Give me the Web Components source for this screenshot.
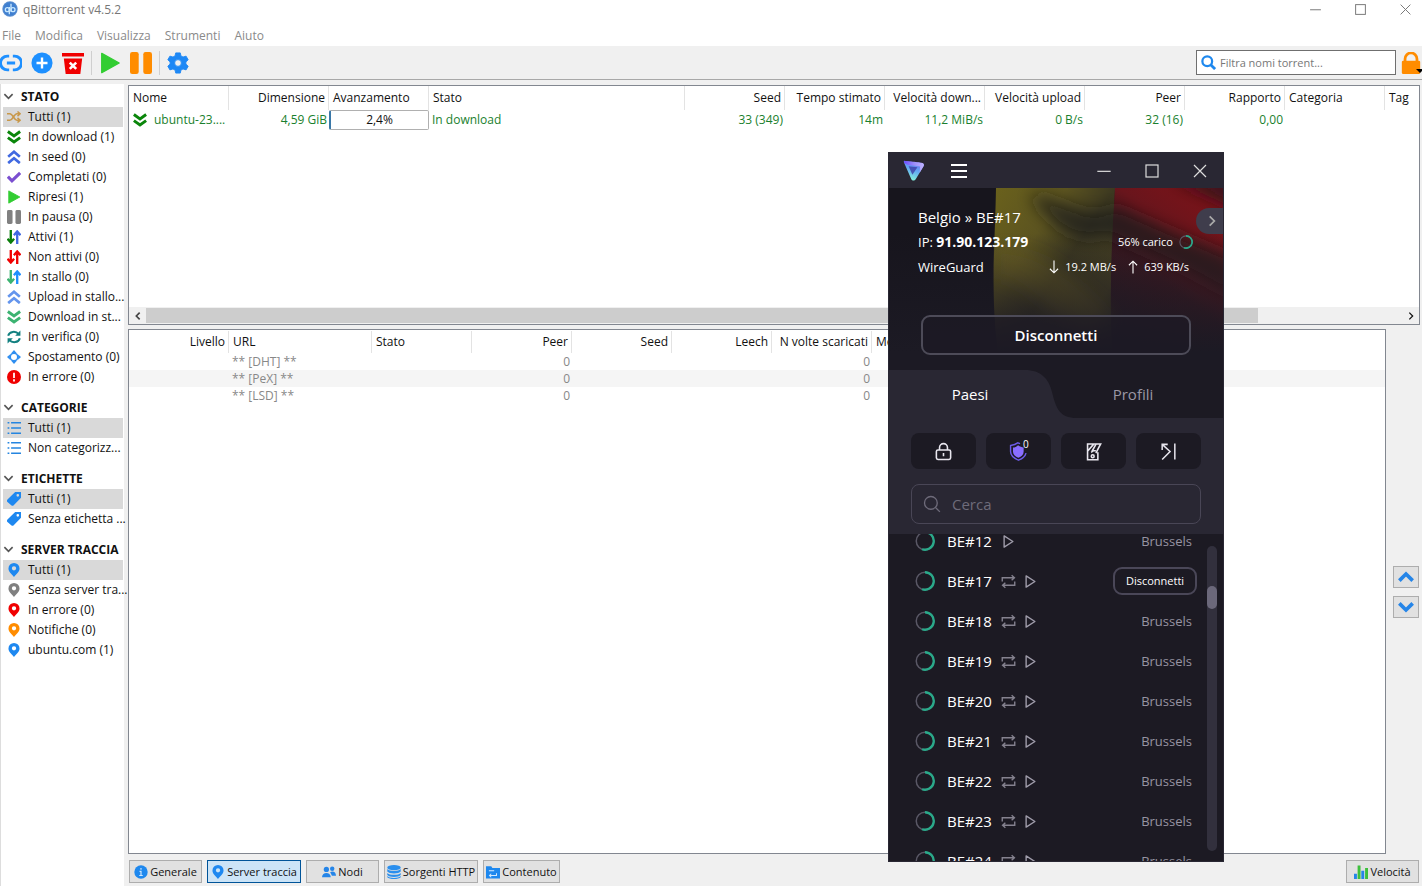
<!DOCTYPE html>
<html lang="it">
<head>
<meta charset="utf-8">
<title>qBittorrent v4.5.2</title>
<style>
  html, body { margin: 0; }
  body { font: 12px/20px "Open Sans", "Noto Sans", sans-serif; color: #111; background: #f0f0f0; overflow-x: hidden; }
</style>
</head>
<body>
<qb-app></qb-app>
<vpn-window></vpn-window>

<script>
const ICONS = {
  logo: '<circle cx="12" cy="12" r="11.5" fill="#5b8fd0"/><circle cx="12" cy="12" r="10" fill="#3f7fd0"/><g fill="none" stroke="#c8e8ff" stroke-width="2"><circle cx="8" cy="13" r="3"/><path d="M11 9v11M13.5 4v12"/><circle cx="16.5" cy="13" r="3"/></g>',
  link: '<g fill="none" stroke="#1e90ff" stroke-width="3.200"><path d="M10 4.500H8a7.500 7.500 0 0 0 0 15h2M14 4.500h2a7.500 7.500 0 0 1 0 15h-2M7.500 12h9"/></g>',
  add: '<circle cx="12" cy="12" r="11.500" fill="#1e90ff"/><path d="M12 6v12M6 12h12" stroke="#fff" stroke-width="2.600"/>',
  trash: '<path d="M0 1h24v4H0zM2 7h20L20 24H4z" fill="#f00000"/><path d="M8.500 11.500l7 7m0-7l-7 7" stroke="#fff" stroke-width="2.800"/>',
  play: '<path d="M3 1.500v21L22 12z" fill="#32cd32" stroke="#32cd32" stroke-width="1.500" stroke-linejoin="round"/>',
  pause: '<rect x="0" y="0" width="9.500" height="24" rx="2.500" fill="currentColor"/><rect x="14.500" y="0" width="9.500" height="24" rx="2.500" fill="currentColor"/>',
  gear: '<path fill="#1e88f5" stroke="#1e88f5" stroke-width="1" stroke-linejoin="round" fill-rule="evenodd" d="M9.500 1h5l.7 3.300 2.300 1.200 3.300-1 2.300 4-2.500 2.300v2.400l2.500 2.300-2.300 4-3.300-1-2.300 1.200-.7 3.300h-5l-.7-3.300-2.300-1.200-3.300 1-2.300-4 2.500-2.300v-2.400L.9 8.500l2.300-4 3.300 1 2.300-1.200zM12 8.300a3.700 3.700 0 1 0 0 7.400 3.700 3.700 0 0 0 0-7.400z"/>',
  search: '<g fill="none" stroke="#1e88ee" stroke-width="3.600"><circle cx="10" cy="10" r="7.800"/><path d="M15.500 15.500l7 7" stroke-width="4.400"/></g>',
  lock: '<path d="M5.500 12V7.500a6.500 6.500 0 0 1 13 0V12" fill="none" stroke="#ff8c00" stroke-width="3"/><rect x="2" y="9.500" width="20" height="14.500" rx="1.500" fill="#ff8c00"/>',
  chevron: '<path d="M3 7l9 9 9-9" fill="none" stroke="#555" stroke-width="3.600"/>',
  shuffle: '<g fill="none" stroke="#c8984a" stroke-width="2.600"><path d="M0 6.500h5c5 0 7 11 12 11h5M0 17.500h5c5 0 7-11 12-11h5M18 2.500l4.500 4-4.500 4M18 13.500l4.500 4-4.500 4"/></g>',
  down2: '<g fill="none" stroke="currentColor" stroke-width="5"><path d="M1.500 2.500L12 10l10.500-7.500M1.500 13L12 20.500 22.500 13"/></g>',
  up2: '<g fill="none" stroke="currentColor" stroke-width="4.600"><path d="M2 11.500l10-8.500 10 8.500M2 22.500L12 14l10 8.500"/></g>',
  check: '<path d="M1.500 11.500l7 7L22.500 5" fill="none" stroke="#7b4fd0" stroke-width="5.500"/>',
  updown: '<g fill="none" stroke-width="4"><path stroke="var(--a)" d="M6.500 0v21M.8 15l5.700 6.500 5.700-6.500"/><path stroke="var(--b)" d="M17.500 24V3M11.800 9l5.700-6.500L23.200 9"/></g>',
  refresh: '<g fill="none" stroke="#128080" stroke-width="3.400"><path d="M2 10C4 2 15 1 20 7M22 14c-2 8-13 9-18 3"/></g><path fill="#128080" d="M23 1v9h-9zM1 23v-9h9z"/>',
  move: '<circle cx="12" cy="12" r="6.500" fill="none" stroke="#2e8ef0" stroke-width="2.800"/><path fill="#2e8ef0" d="M12 0l4.500 5h-9zM12 24l-4.500-5h9zM0 12l5-4.500v9zM24 12l-5 4.500v-9z"/>',
  error: '<circle cx="12" cy="12" r="12" fill="#f00000"/><path d="M12 4.500v9M12 16v3.500" stroke="#fff" stroke-width="3"/>',
  list: '<path stroke="#2585e0" stroke-width="2.800" d="M7 3h17M7 12h17M7 21h17M1 3h3M1 12h3M1 21h3"/>',
  tag: '<path fill="#1e88f0" fill-rule="evenodd" d="M24 0v10L11.500 22.500a3 3 0 0 1-4.200 0L.8 17a3 3 0 0 1 0-4L14 0zM18.500 3.500a2 2 0 1 0 0 4.500 2 2 0 0 0 0-4.500z"/>',
  pin: '<path fill="currentColor" fill-rule="evenodd" d="M12 0a9.500 9.500 0 0 1 9.500 9.500c0 6-6 9.500-9.500 14.500C8.500 19 2.500 15.500 2.500 9.500A9.500 9.500 0 0 1 12 0zm0 5.500a3.700 3.700 0 1 0 0 7.400 3.700 3.700 0 0 0 0-7.400z"/>',
  info: '<circle cx="12" cy="12" r="11.500" fill="#1e88ee"/><path d="M12 5v3M9.500 11H12v7M9 18h6" stroke="#cfe8ff" stroke-width="2" fill="none"/>',
  peers: '<g fill="#2585e8"><circle cx="7.500" cy="7.500" r="4.500"/><path d="M0 21c0-10 15-10 15 0z"/><circle cx="17.500" cy="6.500" r="3.800"/><path d="M14 12.500c4-3 10-1 10 6h-7z"/></g>',
  db: '<g fill="#2a8fee"><ellipse cx="12" cy="4.500" rx="11.500" ry="4.500"/><path d="M.5 7c3 4.500 20 4.500 23 0v4c-3 4.500-20 4.500-23 0zM.5 13.500c3 4.500 20 4.500 23 0v3.500c-3 4.500-20 4.500-23 0zM.5 19c3 4.500 20 4.500 23 0v2c-3 4-20 4-23 0z"/></g>',
  folder: '<path fill="#1e88ee" d="M0 2h9l2 3h13v18H0z"/><path d="M5 10h9M18 14v4H7M9 15l-3 3 3 3" stroke="#d5eaff" stroke-width="1.800" fill="none"/>',
  chart: '<path fill="#2585e8" d="M0 15h5v9H0zM12.500 10h5v14h-5z"/><path fill="#3cc03c" d="M6.200 1h5v23h-5zM19 5h5v19h-5z"/>',
  up: '<path d="M2 17.500L12 7.500l10 10" fill="none" stroke="#2585e8" stroke-width="5.500"/>',
  down: '<path d="M2 6.500l10 10 10-10" fill="none" stroke="#2585e8" stroke-width="5.500"/>',
  left: '<path d="M16 4l-8 8 8 8" fill="none" stroke="#444" stroke-width="4"/>',
  right: '<path d="M8 4l8 8-8 8" fill="none" stroke="currentColor" stroke-width="3"/>',
  min: '<path d="M2 12.500h20" stroke="currentColor" stroke-width="1.800"/>',
  max: '<rect x="3" y="3" width="18" height="18" fill="none" stroke="currentColor" stroke-width="1.800"/>',
  close: '<path d="M3 3l18 18M21 3L3 21" stroke="currentColor" stroke-width="1.800"/>',
  vpn: '<defs><linearGradient id="v1" x1="0" y1="0" x2="1" y2="0"><stop offset="0" stop-color="#6d4aff"/><stop offset=".5" stop-color="#9a8cf8"/><stop offset="1" stop-color="#c0b4ff"/></linearGradient><linearGradient id="v2" x1=".8" y1="0" x2=".4" y2="1"><stop offset="0" stop-color="#6a5ff0"/><stop offset=".5" stop-color="#62a8f2"/><stop offset="1" stop-color="#86f5dc"/></linearGradient></defs><path fill="url(#v2)" d="M1 2.500C.6 1.500 1.500.8 2.500 1l19 2.500c2.200.2 3 2.300 1.800 4L14.500 22c-1.200 2-4 2-5 0z"/><path fill="url(#v1)" d="M1.500 1.200C2 1 22 3 22 3.500c2 .5 2.400 2.500 1.300 4L19 14.500l.5-7L5 5.500 1.200 3z"/><path fill="#3b36a0" d="M6.500 7l10 1.300-5.800 8.500z" opacity=".75"/>',
  menu: '<path d="M0 3h24M0 12h24M0 21h24" stroke="#fff" stroke-width="2.800"/>',
  adown: '<path d="M12 1v20M5 15l7 7 7-7" fill="none" stroke="currentColor" stroke-width="1.900"/>',
  aup: '<path d="M12 23V3M5 9l7-7 7 7" fill="none" stroke="currentColor" stroke-width="1.900"/>',
  load: '<circle cx="12" cy="12" r="10.500" fill="none" stroke="#5a5866" stroke-width="1.800"/><path d="M12 1.500a10.500 10.500 0 1 1-3.500 20.400" fill="none" stroke="#2aa98a" stroke-width="2.800"/>',
  padlock: '<g fill="none" stroke="#e8e6ee" stroke-width="2"><rect x="3" y="10" width="18" height="12" rx="2"/><path d="M7 10V7a5 5 0 0 1 10 0v3M12 14v4"/></g>',
  shield: '<path d="M14 2L11 1C8 3.500 5 4 2 4.500V12c0 5 4 8.500 10 11 5-2 8.500-5 9.500-9" fill="none" stroke="#6d5be8" stroke-width="1.800"/><path d="M11.500 4.200C14 6 16 6.500 18.500 7v5c0 4-3 6.500-6.500 8-4-1.500-7-4-7-8V7c2.500-.3 4.500-1 6.500-2.800z" fill="#8a6eff"/>',
  kill: '<g fill="none" stroke="#e8e6ee" stroke-width="2"><path d="M17.500 13v9.500h-13v-20H21L15 14M5 11l7-8M15 3l-5 9"/><path d="M9 13l3-2h3"/><circle cx="11" cy="18" r="1.800"/></g>',
  forward: '<g fill="none" stroke="#e8e6ee" stroke-width="1.900"><path d="M4 10V3h7M4 3l10 9-10 10M20 2v20"/></g>',
  find: '<g fill="none" stroke="#6e6b7a" stroke-width="1.800"><circle cx="10.500" cy="10.500" r="8.500"/><path d="M16.500 16.500l6 6"/></g>',
  loop: '<g fill="none" stroke="#85828f" stroke-width="2.200"><path d="M2 12V6h19M17 2l4.500 4-4.500 4M22 12v6H3M7 14l-4.500 4L7 22"/></g>',
  tri: '<path d="M5 3v18l14-9z" fill="none" stroke="#a09dab" stroke-width="2.200" stroke-linejoin="round"/>'
};

function define(name, css, html) {
  const t = document.createElement('template');
  customElements.define(name, class extends HTMLElement {
    connectedCallback() {
      if (this.shadowRoot) return;
      t.innerHTML = `<style>*{box-sizing:border-box}button,input{font:inherit;color:inherit}${css}</style>` +
        (typeof html === 'function' ? html(this) : html);
      this.attachShadow({ mode: 'open' }).append(t.content.cloneNode(true));
    }
  });
}
const icon = (name, style = '') => `<ui-icon name="${name}"${style ? ` style="${style}"` : ''}></ui-icon>`;

define('ui-icon',
  ':host{display:inline-block;flex:none;width:var(--size,14px);height:var(--size,14px)}svg{display:block;width:100%;height:100%}',
  el => `<svg viewBox="0 0 24 24" aria-hidden="true">${ICONS[el.getAttribute('name')]}</svg>`);

define('qb-titlebar', `
  :host{display:flex;justify-content:space-between;height:20px;background:#fff;color:#777}
  .name{display:flex;gap:5px;padding-left:2px;--size:16px}
  .name ui-icon{margin-top:1px}
  .win{display:flex;gap:32px;padding-right:10px;--size:13px}
  button{border:0;background:none;padding:0;width:13px;height:18px;display:flex;align-items:center;color:#777}`,
  `<div class="name">${icon('logo')}<span>qBittorrent v4.5.2</span></div>
   <div class="win"><button aria-label="Riduci">${icon('min')}</button><button aria-label="Ingrandisci">${icon('max')}</button><button aria-label="Chiudi">${icon('close')}</button></div>`);

define('qb-menubar', `
  :host{display:flex;gap:14px;height:26px;padding:6px 2px 0;background:#fff;color:#8a8a8a}
  a{color:inherit;text-decoration:none}`,
  ['File', 'Modifica', 'Visualizza', 'Strumenti', 'Aiuto'].map(m => `<a href="#">${m}</a>`).join(''));

define('qb-toolbar', `
  :host{display:flex;align-items:center;gap:9px;height:34px;background:#f0f0f0;border-bottom:1px solid #a8a8a8;--size:22px}
  button{border:0;background:none;padding:0;display:flex}
  i{width:1px;height:24px;background:#cfcfcf;margin:0 -2px}
  label{margin-left:auto;display:flex;align-items:center;gap:4px;width:200px;height:25px;padding:0 4px;background:#fff;border:1px solid #6f6f6f;--size:15px}
  input{border:0;outline:0;padding:0;width:170px;background:none;font-size:11px}
  input::placeholder{color:#777;opacity:1}
  .lock{margin-left:-5px;position:relative}
  .lock::after{content:"";position:absolute;right:-2px;bottom:1px;border:4px solid transparent;border-top-color:#000;border-bottom:0}`,
  `<button aria-label="Aggiungi collegamento">${icon('link')}</button>
   <button aria-label="Aggiungi torrent">${icon('add')}</button>
   <button aria-label="Elimina">${icon('trash')}</button><i></i>
   <button aria-label="Riprendi">${icon('play')}</button>
   <button aria-label="Pausa">${icon('pause', 'color:#ff8c00')}</button><i></i>
   <button aria-label="Opzioni">${icon('gear')}</button>
   <label>${icon('search')}<input type="text" placeholder="Filtra nomi torrent..." aria-label="Filtra nomi torrent"></label>
   <button class="lock" aria-label="Blocca">${icon('lock')}</button>`);

define('qb-filter', `
  :host{display:block}
  button{display:flex;align-items:center;gap:7px;width:100%;height:20px;border:0;padding:0 0 0 4px;background:none;color:#111;text-align:left;white-space:nowrap}
  :host([selected]) button{background:#d9d9d9}`,
  el => `<button>${icon(el.getAttribute('icon'), el.getAttribute('tint') || '')}<span><slot></slot></span></button>`);

define('qb-filter-group', `
  :host{display:block;margin-bottom:10px}
  h2{display:flex;align-items:center;gap:7px;margin:0;height:21px;font-size:12px;line-height:20px;font-weight:700;white-space:nowrap;--size:11px}`,
  el => `<h2>${icon('chevron')}${el.getAttribute('heading')}</h2><slot></slot>`);

const filters = [
  ['STATO', [
    ['shuffle', '', 'Tutti (1)'], ['down2', 'color:#0a860a', 'In download (1)'], ['up2', 'color:#4169e1', 'In seed (0)'],
    ['check', '', 'Completati (0)'], ['play', '', 'Ripresi (1)'], ['pause', 'color:#808080', 'In pausa (0)'],
    ['updown', '--a:#0a7d0a;--b:#4169e1', 'Attivi (1)'], ['updown', '--a:#f00000;--b:#f00000', 'Non attivi (0)'],
    ['updown', '--a:#3cb371;--b:#1e90ff', 'In stallo (0)'], ['up2', 'color:#6495ed', 'Upload in stallo...'],
    ['down2', 'color:#3cb371', 'Download in st...'], ['refresh', '', 'In verifica (0)'], ['move', '', 'Spostamento (0)'], ['error', '', 'In errore (0)']]],
  ['CATEGORIE', [['list', '', 'Tutti (1)'], ['list', '', 'Non categorizz...']]],
  ['ETICHETTE', [['tag', '', 'Tutti (1)'], ['tag', '', 'Senza etichetta ...']]],
  ['SERVER TRACCIA', [['pin', 'color:#1e88f0', 'Tutti (1)'], ['pin', 'color:#808080', 'Senza server tra...'],
    ['pin', 'color:#f00000', 'In errore (0)'], ['pin', 'color:#ff8c00', 'Notifiche (0)'], ['pin', 'color:#1e88f0', 'ubuntu.com (1)']]]
];
define('qb-sidebar', ':host{display:block;background:#fff;border-left:1px solid #ddd;padding:2px 1px 0 2px}',
  filters.map(([h, items]) => `<qb-filter-group heading="${h}">${items.map(([i, t, s], n) =>
    `<qb-filter icon="${i}" tint="${t}"${n ? '' : ' selected'}>${s}</qb-filter>`).join('')}</qb-filter-group>`).join(''));

const TABLE = `
  table{width:100%;table-layout:fixed;border-collapse:separate;border-spacing:0}
  th,td{padding:0 3px 0 4px;text-align:left;white-space:nowrap;overflow:hidden}
  th{font-weight:400;border-right:1px solid #e3e3e3}
  th:last-child{border-right:0}
  .r{text-align:right}
  td{padding:0 3px}td.r{padding-right:2px}`;

const transferCols = [['Nome', 100], ['Dimensione', 100, 1], ['Avanzamento', 100], ['Stato', 0], ['Seed', 100, 1], ['Tempo stimato', 100, 1],
  ['Velocità down...', 100, 1], ['Velocità upload', 100, 1], ['Peer', 100, 1], ['Rapporto', 100, 1], ['Categoria', 100], ['Tag', 34]];
const head = cols => `<colgroup>${cols.map(c => `<col${c[1] ? ` style="width:${c[1]}px"` : ''}>`).join('')}</colgroup>
  <thead><tr>${cols.map(c => `<th scope="col"${c[2] ? ' class="r"' : ''}>${c[0]}</th>`).join('')}</tr></thead>`;

define('qb-transfers', `
  :host{display:flex;flex-direction:column;justify-content:space-between;min-height:240px;background:#fff;border:1px solid #828790;box-sizing:border-box}
  ${TABLE}
  th{height:24px}td{height:20px;color:#1a7f2e}
  .name{display:flex;align-items:center;gap:7px;padding-left:1px}
  .bar{padding:0}
  .bar div{height:20px;line-height:18px;border:1px solid #b0b0b0;border-left:2px solid #3a78a8;border-radius:2px;color:#111;text-align:center}
  .scroll{display:flex;align-items:center;height:17px;background:#f0f0f0;--size:10px}
  .scroll button{width:17px;height:17px;border:0;padding:0;background:none;display:flex;align-items:center;justify-content:center}
  .track{flex:1;height:15px}.thumb{width:88.500%;height:15px;background:#cdcdcd}`,
  `<table>${head(transferCols)}<tbody><tr>
     <td><div class="name">${icon('down2', 'color:#0a860a')}<span>ubuntu-23....</span></div></td><td class="r">4,59 GiB</td><td class="bar"><div>2,4%</div></td>
     <td>In download</td><td class="r">33 (349)</td><td class="r">14m</td><td class="r">11,2 MiB/s</td><td class="r">0 B/s</td>
     <td class="r">32 (16)</td><td class="r">0,00</td><td></td><td></td></tr></tbody></table>
   <div class="scroll"><button aria-label="Scorri a sinistra">${icon('left')}</button><div class="track"><div class="thumb"></div></div><button aria-label="Scorri a destra">${icon('right')}</button></div>`);

const trackerCols = [['Livello', 100, 1], ['URL', 143], ['Stato', 100], ['Peer', 100, 1], ['Seed', 100, 1], ['Leech', 100, 1], ['N volte scaricati', 100, 1], ['Messaggio', 0]];
define('qb-trackers', `
  :host{display:block;flex:1;background:#fff;border:1px solid #828790;padding-top:1px}
  ${TABLE}
  th{height:22px}td{height:17px;line-height:17px;color:#888}
  tbody tr:nth-child(2){background:#f5f5f5}`,
  `<table>${head(trackerCols)}<tbody>${['DHT', 'PeX', 'LSD'].map(n =>
    `<tr><td></td><td>** [${n}] **</td><td></td><td class="r">0</td><td></td><td></td><td class="r">0</td><td></td></tr>`).join('')}</tbody></table>`);

define('qb-tab', `
  :host{display:block}
  button{display:flex;align-items:center;justify-content:center;gap:2px;width:100%;height:23px;padding:0 2px;border:1px solid #adadad;background:#e1e1e1;color:#111;font-size:11px;white-space:nowrap}
  :host([selected]) button{border-color:#005499;background:#cce4f7}`,
  el => `<button>${icon(el.getAttribute('icon'), el.getAttribute('tint') || '')}<slot></slot></button>`);

define('qb-tabs', `
  :host{display:flex;gap:5px;padding:6px 0 3px 1px}
  .s{width:73px}.m{width:94px}.c{width:77px}.end{margin-left:auto;margin-right:1px}`,
  `<qb-tab class="s" icon="info">Generale</qb-tab><qb-tab class="m" icon="pin" tint="color:#1e88f0" selected>Server traccia</qb-tab>
   <qb-tab class="s" icon="peers">Nodi</qb-tab><qb-tab class="m" icon="db">Sorgenti HTTP</qb-tab>
   <qb-tab class="c" icon="folder">Contenuto</qb-tab><qb-tab class="s end" icon="chart">Velocità</qb-tab>`);

define('qb-app', `
  :host{display:flex;flex-direction:column;min-height:100vh}
  main{flex:1;display:grid;grid-template-columns:124px minmax(0,1fr);gap:4px;padding:4px 2px 0 0}
  section{display:flex;flex-direction:column;padding-top:1px}
  .details{flex:1;display:flex;gap:7px;margin-top:4px}
  .order{display:flex;flex-direction:column;justify-content:center;gap:8px;padding-right:1px;--size:16px}
  .order button{display:flex;align-items:center;justify-content:center;width:26px;height:22px;padding:0;border:1px solid #adadad;background:#e1e1e1}`,
  `<qb-titlebar></qb-titlebar><qb-menubar></qb-menubar><qb-toolbar></qb-toolbar>
   <main><qb-sidebar></qb-sidebar><section><qb-transfers></qb-transfers>
     <div class="details"><qb-trackers></qb-trackers><div class="order"><button aria-label="Sposta su">${icon('up')}</button><button aria-label="Sposta giù">${icon('down')}</button></div></div>
     <qb-tabs></qb-tabs></section></main>`);

define('vpn-server', `
  :host{display:flex;align-items:center;height:40px;padding:0 31px 0 26px;font-size:15px;color:#fff}
  .load{--size:20px;margin-right:12px;display:flex}
  .acts{display:flex;align-items:center;gap:7px;margin-left:9px;--size:15px}
  .city{margin-left:auto;font-size:13px;color:#9794a2}
  button{margin:0 -5px 0 auto;width:84px;height:28px;padding:0;border:2px solid #4a4758;border-radius:9px;background:none;font-size:11px}`,
  el => `<span class="load">${icon('load')}</span><slot></slot><span class="acts">${el.hasAttribute('basic') ? '' : icon('loop')}${icon('tri')}</span>` +
    (el.hasAttribute('connected') ? '<button>Disconnetti</button>' : '<span class="city">Brussels</span>'));

define('vpn-status', `
  :host{display:block;position:relative;height:182px;box-sizing:border-box;padding:16px 30px 0 29px;color:#fff;background:#1c1a24}
  .flag{position:absolute;inset:0;width:100%;height:100%}
  .content{position:relative}
  .row{display:flex;align-items:center;height:25px;font-size:13px;white-space:nowrap}
  .row:first-child{font-size:15px}
  b{font-size:14px}
  .end{margin-left:auto;display:flex;align-items:center;gap:6px;font-size:11px;--size:14px}
  .rates{padding-right:4px;gap:4px}
  .connect{display:block;width:calc(100% - 5px);height:40px;margin:36px 0 0 3px;padding:0;border:2px solid #4d4b58;border-radius:9px;background:#1c1a24a0;font-size:15px;font-weight:600}
  .more{position:absolute;right:0;top:20px;width:27px;height:26px;padding:0 0 0 5px;border:0;border-radius:13px 0 0 13px;background:#3f3d4c;color:#aaa;display:flex;align-items:center;justify-content:center;--size:14px}`,
  `<svg class="flag" viewBox="0 0 334 182" preserveAspectRatio="none" aria-hidden="true">
     <defs>
       <linearGradient id="y" x1="0" y1="0" x2="1" y2="1"><stop offset="0" stop-color="#6a611c"/><stop offset=".3" stop-color="#5c5420"/><stop offset=".5" stop-color="#3c3820"/><stop offset=".75" stop-color="#474122"/><stop offset="1" stop-color="#2c2922"/></linearGradient>
       <linearGradient id="r" x1=".7" y1="0" x2=".2" y2="1"><stop offset="0" stop-color="#791319"/><stop offset=".25" stop-color="#69151c"/><stop offset=".5" stop-color="#3b171f"/><stop offset="1" stop-color="#211a23"/></linearGradient>
       <linearGradient id="f" x1="0" y1="0" x2="0" y2="1"><stop offset=".25" stop-color="#1c1a24" stop-opacity="0"/><stop offset=".9" stop-color="#1c1a24"/></linearGradient>
       <filter id="b" x="-30%" y="-30%" width="160%" height="160%"><feGaussianBlur stdDeviation="8"/></filter>
       <clipPath id="c"><path d="M107 0H334V182H112C100 120 104 70 107 0z"/></clipPath>
     </defs>
     <rect width="334" height="182" fill="#17151d"/>
     <path fill="url(#y)" d="M107 0H226C224 60 220 90 224 182H112C100 120 106 60 107 0z"/>
     <path fill="url(#r)" d="M226 0H334V182H224C220 120 222 60 226 0z"/>
     <g clip-path="url(#c)"><g filter="url(#b)"><path fill="#1d1c1c" opacity=".7" d="M140 8C170 4 200 40 225 18L345 70V110C280 70 240 60 220 46 180 60 160 30 140 8z"/><path fill="#756923" opacity=".5" d="M107 60C150 60 190 90 224 130L200 150C150 120 130 90 107 90z"/><path fill="#1c161c" opacity=".7" d="M280-10H350V22z"/></g></g>
     <rect width="334" height="182" fill="url(#f)"/>
   </svg>
   <div class="content">
     <div class="row">Belgio » BE#17</div>
     <div class="row"><span>IP: <b>91.90.123.179</b></span><span class="end">56% carico ${icon('load')}</span></div>
     <div class="row">WireGuard<span class="end rates">${icon('adown')}19.2 MB/s ${icon('aup', 'margin-left:6px')}639 KB/s</span></div>
     <button class="connect">Disconnetti</button>
   </div>
   <button class="more" aria-label="Espandi">${icon('right')}</button>`);

const servers = ['BE#12', 'BE#17', 'BE#18', 'BE#19', 'BE#20', 'BE#21', 'BE#22', 'BE#23', 'BE#24'];
define('vpn-window', `
  :host{position:absolute;left:888px;top:152px;width:336px;height:710px;box-sizing:border-box;border:1px solid #292733;background:#1c1a23;overflow:hidden;color:#fff;display:flex;flex-direction:column}
  header{display:flex;align-items:center;height:35px;padding:0 15px 0 14px;background:#292733}
  header button,.quick button{border:0;padding:0;background:none;display:flex;align-items:center;justify-content:center}
  .burger{margin:0 auto 0 27px}
  .win{display:flex;gap:32px;color:#ddd;--size:16px}
  .tabs{position:relative;display:grid;grid-template-columns:162px 1fr;height:48px;flex:none;padding-right:8px}
  .tabs svg{position:absolute;left:0;top:0}
  .tabs button{position:relative;border:0;padding:0;background:none;font-size:15px;color:#fff}
  .tabs button + button{color:#9a97a5}
  .panel{background:#292733;padding:15px 22px 10px}
  .quick{display:grid;grid-template-columns:repeat(4,1fr);gap:10px;margin-bottom:15px;--size:19px}
  .quick button{height:36px;border-radius:8px;background:#1c1a23;position:relative}
  .quick sup{position:absolute;left:37px;top:4px;font-size:10px;line-height:14px}
  label{display:flex;align-items:center;gap:11px;height:40px;padding:0 11px;border:1px solid #494656;border-radius:8px;--size:18px}
  input{border:0;outline:0;padding:0;background:none;font-size:15px;min-width:0;flex:1}
  input::placeholder{color:#6e6b7a;opacity:1}
  .list{position:relative;flex:1;min-height:0;overflow:hidden}
  .rows{margin-top:-13px}
  .scroll{position:absolute;right:6px;top:12px;bottom:10px;width:10px;border-radius:5px;background:#32303d;padding-top:40px}
  .scroll div{height:23px;border-radius:5px;background:#6b687a}`,
  `<header>${icon('vpn', '--size:21px')}<button class="burger" aria-label="Menu">${icon('menu', '--size:16px')}</button>
     <div class="win"><button aria-label="Riduci">${icon('min')}</button><button aria-label="Ingrandisci">${icon('max')}</button><button aria-label="Chiudi">${icon('close')}</button></div></header>
   <vpn-status></vpn-status>
   <div class="tabs"><svg width="200" height="48" aria-hidden="true"><path fill="#292733" d="M0 0H136C152 0 160 9 163 22C167 38 170 48 188 48H0z"/></svg><button>Paesi</button><button>Profili</button></div>
   <div class="panel"><div class="quick"><button aria-label="Secure Core">${icon('padlock')}</button><button aria-label="NetShield">${icon('shield')}<sup>0</sup></button><button aria-label="Kill switch">${icon('kill')}</button><button aria-label="Port forwarding">${icon('forward')}</button></div>
     <label>${icon('find')}<input type="text" placeholder="Cerca" aria-label="Cerca"></label></div>
   <div class="list"><div class="rows">${servers.map((s, n) => `<vpn-server${n === 0 ? ' basic' : n === 1 ? ' connected' : ''}>${s}</vpn-server>`).join('')}</div><div class="scroll"><div></div></div></div>`);
</script>
</body>
</html>
